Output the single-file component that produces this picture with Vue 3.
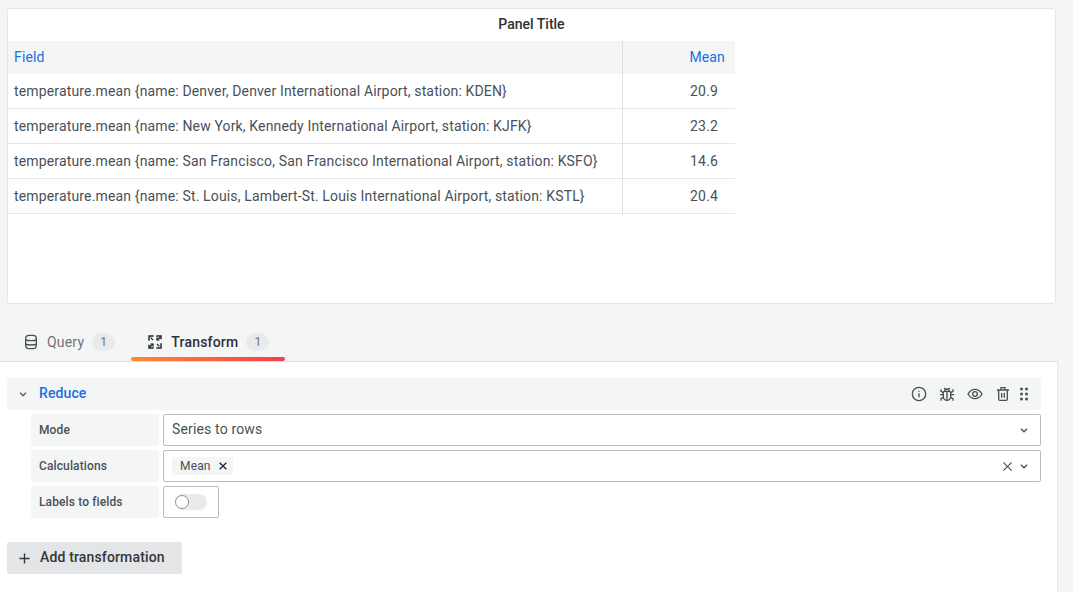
<template>
  <div class="page">
    <section class="panel">
      <h2 class="panel-title">Panel Title</h2>
      <table class="data-table">
        <thead>
          <tr>
            <th class="field-col">Field</th>
            <th class="mean-col">Mean</th>
          </tr>
        </thead>
        <tbody>
          <tr v-for="row in rows" :key="row.field">
            <td class="field-col">{{ row.field }}</td>
            <td class="mean-col value">{{ row.mean }}</td>
          </tr>
        </tbody>
      </table>
    </section>

    <div class="tabs">
      <div class="tab">
        <svg class="tab-icon" viewBox="0 0 24 24" fill="none" stroke="currentColor" stroke-width="2">
          <rect x="4" y="2" width="16" height="20" rx="5" />
          <path d="M4 8.500c2 2 14 2 16 0M4 15c2 2 14 2 16 0" />
        </svg>
        <span>Query</span>
        <span class="count">1</span>
      </div>
      <div class="tab active">
        <svg class="tab-icon" viewBox="0 0 24 24" fill="none" stroke="currentColor" stroke-width="2.200">
          <path d="M3 10V3h7M14 3h7v5M21 14v7h-7M10 21H3v-5" />
          <path d="M20 4.500 15 9M4 19.500 9 15" />
          <path d="M15 5v4h4M9 19v-4H5" stroke-width="1.800" />
          <path d="m15 15 3.500 3.500M9 9 5.500 5.500" stroke-width="1.800" />
        </svg>
        <span>Transform</span>
        <span class="count">1</span>
      </div>
    </div>

    <div class="content">
      <div class="op-row">
        <div class="op-left">
          <svg class="chevron" viewBox="0 0 24 24" fill="none" stroke="currentColor" stroke-width="2.400">
            <path d="m6 9.500 6 6 6-6" />
          </svg>
          <span class="op-name">Reduce</span>
        </div>
        <div class="op-actions">
          <svg viewBox="0 0 24 24" fill="none" stroke="currentColor" stroke-width="2">
            <circle cx="12" cy="12" r="10" />
            <path d="M12 11v6M12 7v1.500" />
          </svg>
          <svg viewBox="0 0 24 24" fill="none" stroke="currentColor" stroke-width="2">
            <path d="M8.500 8h7a2 2 0 0 1 2 2v6a5.500 5.500 0 0 1-11 0v-6a2 2 0 0 1 2-2Z" />
            <path d="M12 8v13M8.500 8a3.500 3.500 0 0 1 7 0M8 3l1.800 2.500M16 3l-1.800 2.500" />
            <path d="M6.500 13H1.500M22.500 13h-5M6.500 10 3 8V5M17.500 10 21 8V5M6.800 17 3 19v3M17.200 17l3.800 2v3" />
          </svg>
          <svg viewBox="0 0 24 24" fill="none" stroke="currentColor" stroke-width="2">
            <path d="M1.500 12S5.500 5 12 5s10.500 7 10.500 7-4 7-10.500 7S1.500 12 1.500 12Z" />
            <circle cx="12" cy="12" r="3.500" />
          </svg>
          <svg viewBox="0 0 24 24" fill="none" stroke="currentColor" stroke-width="2">
            <path d="M3 6h18M9 6V2.500h6V6M5.500 6v13.500a2 2 0 0 0 2 2h9a2 2 0 0 0 2-2V6" />
            <path d="M10 10.500v7M14 10.500v7" />
          </svg>
          <svg class="grip" viewBox="0 0 8 14" fill="currentColor">
            <circle cx="1.500" cy="2" r="1.500" />
            <circle cx="6.500" cy="2" r="1.500" />
            <circle cx="1.500" cy="7" r="1.500" />
            <circle cx="6.500" cy="7" r="1.500" />
            <circle cx="1.500" cy="12" r="1.500" />
            <circle cx="6.500" cy="12" r="1.500" />
          </svg>
        </div>
      </div>

      <div class="form">
        <div class="form-row">
          <label class="form-label">Mode</label>
          <div class="input">
            <span class="input-text">Series to rows</span>
            <svg class="small-chevron" viewBox="0 0 24 24" fill="none" stroke="currentColor" stroke-width="2.600">
              <path d="m6 9.500 6 6 6-6" />
            </svg>
          </div>
        </div>
        <div class="form-row">
          <label class="form-label">Calculations</label>
          <div class="input">
            <span class="tag">
              Mean
              <svg viewBox="0 0 12 12" fill="none" stroke="currentColor" stroke-width="1.600">
                <path d="m2 2 8 8M10 2l-8 8" />
              </svg>
            </span>
            <svg class="clear" viewBox="0 0 12 12" fill="none" stroke="currentColor" stroke-width="1.200">
              <path d="m1.500 1.500 9 9M10.500 1.500l-9 9" />
            </svg>
            <svg class="small-chevron tight" viewBox="0 0 24 24" fill="none" stroke="currentColor" stroke-width="2.600">
              <path d="m6 9.500 6 6 6-6" />
            </svg>
          </div>
        </div>
        <div class="form-row">
          <label class="form-label">Labels to fields</label>
          <div class="switch-box">
            <span class="switch"><span class="knob"></span></span>
          </div>
        </div>
      </div>

      <button class="add-btn" type="button">
        <svg viewBox="0 0 12 12" fill="none" stroke="currentColor" stroke-width="1.500">
          <path d="M6 .5v11M.5 6h11" />
        </svg>
        <span>Add transformation</span>
      </button>
    </div>
  </div>
</template>

<script setup>
const rows = [
  { field: 'temperature.mean {name: Denver, Denver International Airport, station: KDEN}', mean: '20.9' },
  { field: 'temperature.mean {name: New York, Kennedy International Airport, station: KJFK}', mean: '23.2' },
  { field: 'temperature.mean {name: San Francisco, San Francisco International Airport, station: KSFO}', mean: '14.6' },
  { field: 'temperature.mean {name: St. Louis, Lambert-St. Louis International Airport, station: KSTL}', mean: '20.4' }
]
</script>

<style>
html,
body {
  margin: 0;
  background: #f4f5f5;
  overflow: hidden;
}
</style>

<style scoped>
.page {
  width: 1073px;
  height: 592px;
  padding-top: 8px;
  box-sizing: border-box;
  overflow: hidden;
  font-family: Roboto, "Liberation Sans", sans-serif;
  font-size: 14px;
  color: #4a5057;
  background: #f4f5f5;
}

.panel {
  width: 1049px;
  height: 296px;
  margin-left: 7px;
  box-sizing: border-box;
  background: #fff;
  border: 1px solid #e6e7e8;
  border-radius: 3px;
}

.panel-title {
  margin: 0;
  height: 32px;
  line-height: 31px;
  text-align: center;
  font-size: 14px;
  font-weight: 500;
  color: #2c3136;
}

.data-table {
  width: 727px;
  table-layout: fixed;
  border-collapse: separate;
  border-spacing: 0;
  letter-spacing: 0.15px;
}

.data-table th {
  height: 33px;
  padding: 0 0 2px;
  background: #f4f5f5;
  font-weight: 400;
  color: #1a6fe3;
  text-align: left;
}

.data-table td {
  height: 35px;
  padding: 0;
  border-bottom: 1px solid #e6e7e8;
}

.field-col {
  width: 614px;
  padding-left: 6px !important;
  box-sizing: border-box;
}

.mean-col {
  border-left: 1px solid #dcdee0;
  text-align: right !important;
  padding-right: 10px !important;
  box-sizing: border-box;
}

.value {
  padding-right: 17px !important;
}

.tabs {
  display: flex;
  height: 57px;
  margin-left: 7px;
  align-items: flex-end;
}

.tab {
  display: flex;
  align-items: center;
  gap: 8px;
  height: 33px;
  padding: 0 16px 6px;
  box-sizing: border-box;
  color: #6e7378;
  position: relative;
  letter-spacing: 0.2px;
}

.tab.active {
  font-weight: 500;
  color: #2c3136;
}

.tab.active::after {
  content: "";
  position: absolute;
  left: 0;
  right: 0;
  bottom: 0;
  height: 4px;
  border-radius: 2px;
  background: linear-gradient(90deg, #ff8833, #f53e4c);
}

.tab-icon {
  width: 16px;
  height: 16px;
  color: #4a5057;
}

.tab.active .tab-icon {
  color: #24292e;
}

.count {
  width: 23px;
  height: 18px;
  border-radius: 9px;
  background: #e9eaeb;
  color: #6e7378;
  font-size: 12px;
  font-weight: 400;
  line-height: 18px;
  text-align: center;
}

.content {
  width: 1058px;
  height: 231px;
  padding: 16px 16px 0 7px;
  box-sizing: border-box;
  background: #fff;
  border-top: 1px solid #dcdee0;
  border-right: 1px solid #e6e7e8;
}

.op-row {
  display: flex;
  align-items: center;
  justify-content: space-between;
  height: 32px;
  background: #f4f5f5;
  border-radius: 2px;
  padding-left: 10px;
  padding-right: 13px;
}

.op-left {
  display: flex;
  align-items: center;
  gap: 10px;
}

.chevron {
  width: 12px;
  height: 12px;
  color: #4a5057;
}

.op-name {
  color: #1a6fe3;
  font-weight: 500;
  padding-bottom: 2px;
  letter-spacing: 0.1px;
}

.op-actions {
  display: flex;
  align-items: center;
  gap: 12px;
  color: #4a5057;
}

.op-actions svg {
  width: 16px;
  height: 16px;
}

.op-actions .grip {
  width: 8px;
  height: 14px;
  margin-left: -3px;
}

.form {
  display: flex;
  flex-direction: column;
  gap: 4px;
  margin-top: 4px;
  margin-left: 24px;
}

.form-row {
  display: flex;
  gap: 4px;
  height: 32px;
}

.form-label {
  width: 128px;
  padding-left: 8px;
  box-sizing: border-box;
  background: #f4f5f5;
  border-radius: 2px;
  font-size: 12px;
  font-weight: 500;
  line-height: 32px;
  letter-spacing: 0.12px;
}

.input {
  display: flex;
  align-items: center;
  flex: 1;
  padding: 0 10px 0 8px;
  box-sizing: border-box;
  border: 1px solid #b9bbbd;
  border-radius: 2px;
  background: #fff;
}

.input-text {
  flex: 1;
  padding-bottom: 2px;
  letter-spacing: 0.15px;
}

.small-chevron {
  width: 12px;
  height: 12px;
  color: #4a5057;
}

.tag {
  display: flex;
  align-items: center;
  gap: 7px;
  height: 18px;
  padding: 0 5px 0 8px;
  margin-right: auto;
  border-radius: 2px;
  background: #f4f5f5;
  font-size: 12px;
  letter-spacing: 0.15px;
}

.tag svg {
  width: 10px;
  height: 10px;
  color: #24292e;
}

.clear {
  width: 11px;
  height: 11px;
  margin-right: 5px;
  color: #4a5057;
}

.switch-box {
  display: flex;
  align-items: center;
  width: 56px;
  padding-left: 11px;
  box-sizing: border-box;
  border: 1px solid #b9bbbd;
  border-radius: 2px;
  background: #fff;
}

.switch {
  position: relative;
  display: block;
  width: 32px;
  height: 16px;
  border-radius: 8px;
  background: #e9eaeb;
}

.knob {
  position: absolute;
  left: 0;
  top: 1px;
  width: 14px;
  height: 14px;
  box-sizing: border-box;
  border: 1px solid #8e9193;
  border-radius: 50%;
  background: #fff;
}

.add-btn {
  display: flex;
  align-items: center;
  gap: 10px;
  width: 175px;
  height: 32px;
  margin-top: 24px;
  padding: 0 0 0 12px;
  border: 0;
  border-radius: 2px;
  background: #e4e5e6;
  color: #33383d;
  font-family: inherit;
  font-size: 14px;
  font-weight: 500;
  letter-spacing: 0.15px;
}

.add-btn span {
  padding-bottom: 2px;
}

.add-btn svg {
  width: 11px;
  height: 11px;
}
</style>
